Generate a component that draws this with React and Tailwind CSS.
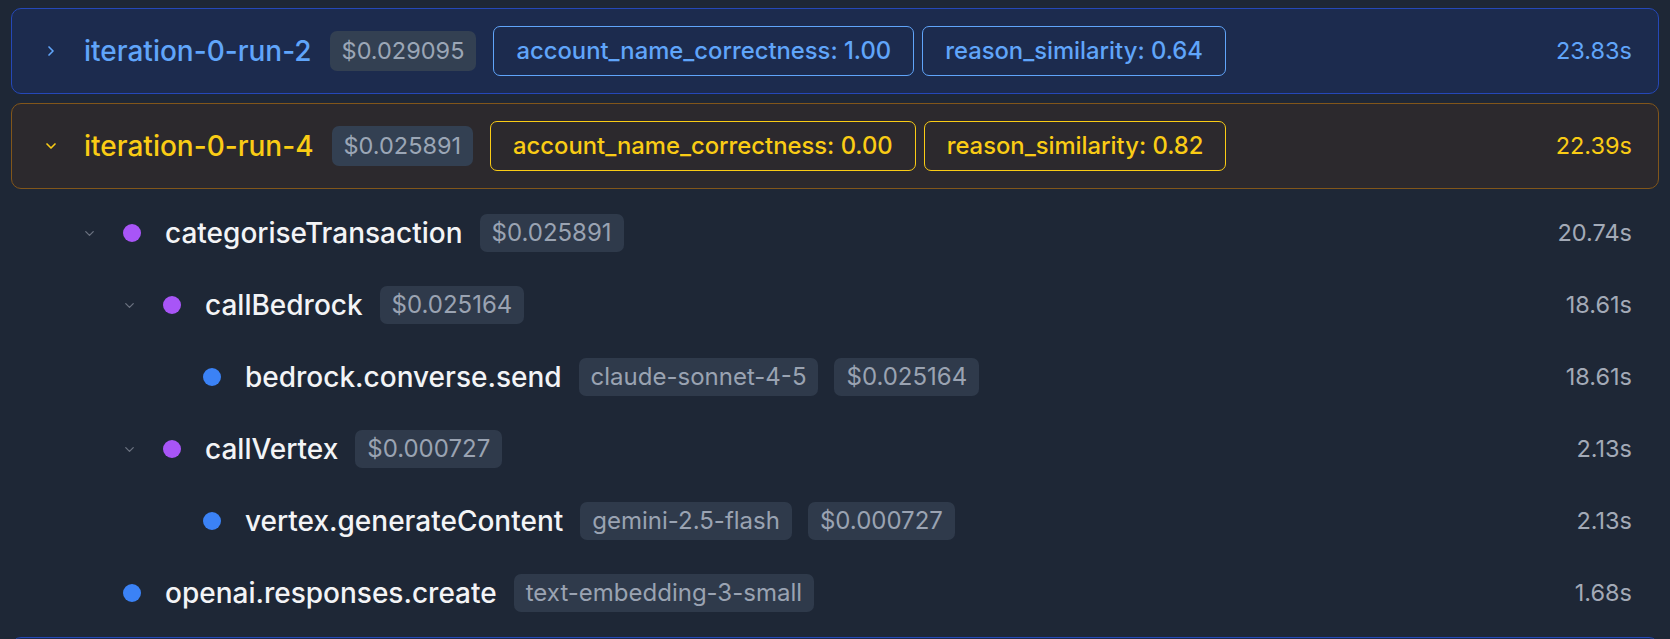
import React from 'react';
import { ChevronRight, ChevronDown } from 'lucide-react';

const runs = [
  {
    name: 'iteration-0-run-2',
    cost: '$0.029095',
    open: false,
    tone: 'blue',
    scores: ['account_name_correctness: 1.00', 'reason_similarity: 0.64'],
    time: '23.83s',
  },
  {
    name: 'iteration-0-run-4',
    cost: '$0.025891',
    open: true,
    tone: 'yellow',
    scores: ['account_name_correctness: 0.00', 'reason_similarity: 0.82'],
    time: '22.39s',
  },
];

const spans = [
  { name: 'categoriseTransaction', level: 0, kind: 'fn', toggle: true, tags: ['$0.025891'], time: '20.74s' },
  { name: 'callBedrock', level: 1, kind: 'fn', toggle: true, tags: ['$0.025164'], time: '18.61s' },
  { name: 'bedrock.converse.send', level: 2, kind: 'llm', tags: ['claude-sonnet-4-5', '$0.025164'], time: '18.61s' },
  { name: 'callVertex', level: 1, kind: 'fn', toggle: true, tags: ['$0.000727'], time: '2.13s' },
  { name: 'vertex.generateContent', level: 2, kind: 'llm', tags: ['gemini-2.5-flash', '$0.000727'], time: '2.13s' },
  { name: 'openai.responses.create', level: 0, kind: 'llm', tags: ['text-embedding-3-small'], time: '1.68s' },
];

const indent = ['pl-0', 'pl-[40px]', 'pl-[80px]'];

const RunRow = ({ run }) => {
  const blue = run.tone === 'blue';
  return (
    <div
      className={`flex items-center h-[86px] rounded-[10px] border-[1.5px] pl-[31px] pr-[26px] ${
        blue ? 'bg-[#1c2b4e] border-[#2548b8]' : 'bg-[#2c292d] border-[#82561a]'
      }`}
    >
      <div className={`w-[16px] flex justify-center ${blue ? 'text-[#60a5fa]' : 'text-[#facc15]'}`}>
        {run.open ? <ChevronDown size={16} strokeWidth={2.5} /> : <ChevronRight size={16} strokeWidth={2.5} />}
      </div>
      <span className={`ml-[25px] text-[28px] font-medium ${blue ? 'text-[#60a5fa]' : 'text-[#facc15]'}`}>
        {run.name}
      </span>
      <span className="ml-[18px] h-[40px] flex items-center px-[12px] rounded-[7px] bg-[#334052] text-[#9ba6b6] text-[23.5px]">
        {run.cost}
      </span>
      <div className="ml-[17px] flex gap-[8px]">
        {run.scores.map((s) => (
          <span
            key={s}
            className={`h-[50px] flex items-center px-[22px] rounded-[7px] border-[1.5px] text-[23.8px] font-medium ${
              blue ? 'border-[#60a5fa] text-[#60a5fa]' : 'border-[#facc15] text-[#facc15]'
            }`}
          >
            {s}
          </span>
        ))}
      </div>
      <span className={`ml-auto text-[23.5px] ${blue ? 'text-[#60a5fa]' : 'text-[#facc15]'}`}>{run.time}</span>
    </div>
  );
};

const SpanRow = ({ span }) => (
  <div className={`flex items-center h-[72px] ${indent[span.level]}`}>
    <div className="w-[16px] flex justify-center text-[#6b7280]">
      {span.toggle && <ChevronDown size={15} strokeWidth={2} />}
    </div>
    <span
      className={`ml-[26px] w-[18px] h-[18px] rounded-full ${span.kind === 'fn' ? 'bg-[#a855f7]' : 'bg-[#3b82f6]'}`}
    />
    <span className="ml-[24px] text-[28px] font-medium text-[#f3f4f6]">{span.name}</span>
    <div className="ml-[17px] flex gap-[16px]">
      {span.tags.map((t) => (
        <span key={t} className="h-[38px] flex items-center px-[12px] rounded-[7px] bg-[#2f3a4b] text-[#9aa3b2] text-[24px]">
          {t}
        </span>
      ))}
    </div>
    <span className="ml-auto text-[23.5px] text-[#a3aab7]">{span.time}</span>
  </div>
);

export default function App() {
  return (
    <div className="h-[639px] overflow-hidden bg-[#1e2736] px-[11px] pt-[8px] font-['Inter',sans-serif]">
      <div className="flex flex-col gap-[9px]">
        {runs.map((r) => (
          <RunRow key={r.name} run={r} />
        ))}
      </div>
      <div className="pl-[70px] pr-[27px] pt-[8px]">
        {spans.map((s) => (
          <SpanRow key={s.name} span={s} />
        ))}
      </div>
      <div className="mt-[8px] h-[86px] rounded-[10px] border-[1.5px] bg-[#1c2b4e] border-[#2548b8]" />
    </div>
  );
}
